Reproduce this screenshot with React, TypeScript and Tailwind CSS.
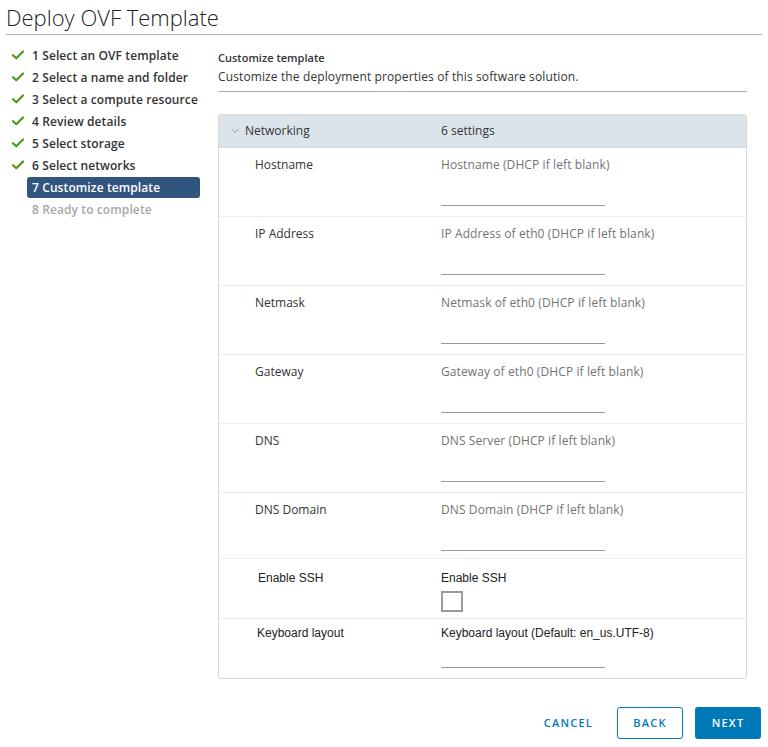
import React from "react";

const steps = [
  { n: "1 Select an OVF template", done: true },
  { n: "2 Select a name and folder", done: true },
  { n: "3 Select a compute resource", done: true },
  { n: "4 Review details", done: true },
  { n: "5 Select storage", done: true },
  { n: "6 Select networks", done: true },
  { n: "7 Customize template", active: true },
  { n: "8 Ready to complete", pending: true },
];

const net = [
  ["Hostname", "Hostname (DHCP if left blank)"],
  ["IP Address", "IP Address of eth0 (DHCP if left blank)"],
  ["Netmask", "Netmask of eth0 (DHCP if left blank)"],
  ["Gateway", "Gateway of eth0 (DHCP if left blank)"],
  ["DNS", "DNS Server (DHCP if left blank)"],
  ["DNS Domain", "DNS Domain (DHCP if left blank)"],
];

function Check() {
  return (
    <svg width="12" height="10" viewBox="0 0 12 10" className="block">
      <path d="M1 5.2 L4.3 8.3 L11 1.5" fill="none" stroke="#4a9a1a" strokeWidth="2.2" strokeLinecap="round" strokeLinejoin="round" />
    </svg>
  );
}

export default function App() {
  return (
    <div className="w-[768px] h-[747px] bg-white text-[#333] font-['Open_Sans',sans-serif] flex flex-col">
      <div className="px-[6px]">
        <h1 className="text-[22px] font-light leading-[34px] h-[34px] text-[#222]">Deploy OVF Template</h1>
        <div className="h-px bg-[#b3b3b3] w-[756px]" />
      </div>
      <div className="flex pt-[9px] px-[6px]">
        <div className="w-[206px] shrink-0 flex flex-col">
          {steps.map((s) => (
            <div key={s.n} className="flex items-center h-[22px]">
              <div className="w-[21px] flex items-center pl-[6px]">{s.done && <Check />}</div>
              <div
                className={
                  "w-[173px] h-[21px] rounded-[3px] px-[5px] text-[12px] font-semibold tracking-[0.1px] leading-[21px] whitespace-nowrap " +
                  (s.active ? "bg-[#31557f] text-white" : s.pending ? "text-[#a8a8a8]" : "text-[#333]")
                }
              >
                {s.n}
              </div>
            </div>
          ))}
        </div>
        <div className="w-[529px] ml-[6px] flex flex-col">
          <div className="text-[11px] font-semibold leading-[14px] pt-[7px] text-[#333]">Customize template</div>
          <div className="text-[12px] leading-[16px] pt-[4px] tracking-[0.12px] text-[#333]">Customize the deployment properties of this software solution.</div>
          <div className="h-px bg-[#aaa] mt-[6px]" />
          <div className="mt-[22px] border border-[#d7d7d7] rounded-[3px] overflow-hidden">
            <div className="h-[33px] bg-[#dbe4eb] flex items-center text-[12px] font-medium border-b border-[#d0d9e0]">
              <div className="w-[222px] flex items-center">
                <svg width="8" height="6" viewBox="0 0 8 6" className="ml-[12px] mr-[6px]">
                  <path d="M0.5 1 L4 4.5 L7.5 1" fill="none" stroke="#8a9aa8" strokeWidth="1" />
                </svg>
                <span>Networking</span>
              </div>
              <span className="font-normal">6 settings</span>
            </div>
            {net.map(([label, ph], i) => (
              <div
                key={label}
                className={
                  "grid grid-cols-[222px_1fr] border-b border-[#ececec] pt-[10px] " + (i === 5 ? "pb-[7px]" : "pb-[10px]")
                }
              >
                <div className="pl-[36px] text-[12px] leading-[14px] font-medium text-[#333]">{label}</div>
                <div className="flex flex-col">
                  <div className="text-[12px] leading-[14px] tracking-[0.1px] text-[#737373]">{ph}</div>
                  <div className="mt-[10px] w-[164px] h-[24px] border-b border-[#9a9a9a]" />
                </div>
              </div>
            ))}
            <div className="grid grid-cols-[222px_1fr] border-b border-[#ececec] pt-[12px] pb-[6px] font-['Liberation_Sans',sans-serif]">
              <div className="pl-[39px] text-[12px] leading-[14px] text-[#222]">Enable SSH</div>
              <div className="flex flex-col">
                <div className="text-[12px] leading-[14px] text-[#222]">Enable SSH</div>
                <div className="mt-[6px] w-[22px] h-[21px] border-2 border-[#9c9c9c]" />
              </div>
            </div>
            <div className="grid grid-cols-[222px_1fr] pt-[7px] pb-[10px] font-['Liberation_Sans',sans-serif]">
              <div className="pl-[38px] text-[12px] leading-[14px] text-[#222]">Keyboard layout</div>
              <div className="flex flex-col">
                <div className="text-[12px] leading-[14px] text-[#222]">Keyboard layout (Default: en_us.UTF-8)</div>
                <div className="mt-[4px] w-[164px] h-[24px] border-b border-[#9a9a9a]" />
              </div>
            </div>
          </div>
        </div>
      </div>
      <div className="flex justify-end items-center gap-[12px] pr-[7px] mt-[28px]">
        <button className="h-[32px] px-[12px] text-[11px] font-semibold tracking-[1.2px] text-[#0079b8]">CANCEL</button>
        <button className="h-[32px] w-[66px] rounded-[3px] border border-[#0079b8] text-[11px] font-semibold tracking-[1.2px] text-[#0079b8]">BACK</button>
        <button className="h-[32px] w-[66px] rounded-[3px] bg-[#0079b8] text-[11px] font-semibold tracking-[1.2px] text-white">NEXT</button>
      </div>
    </div>
  );
}
